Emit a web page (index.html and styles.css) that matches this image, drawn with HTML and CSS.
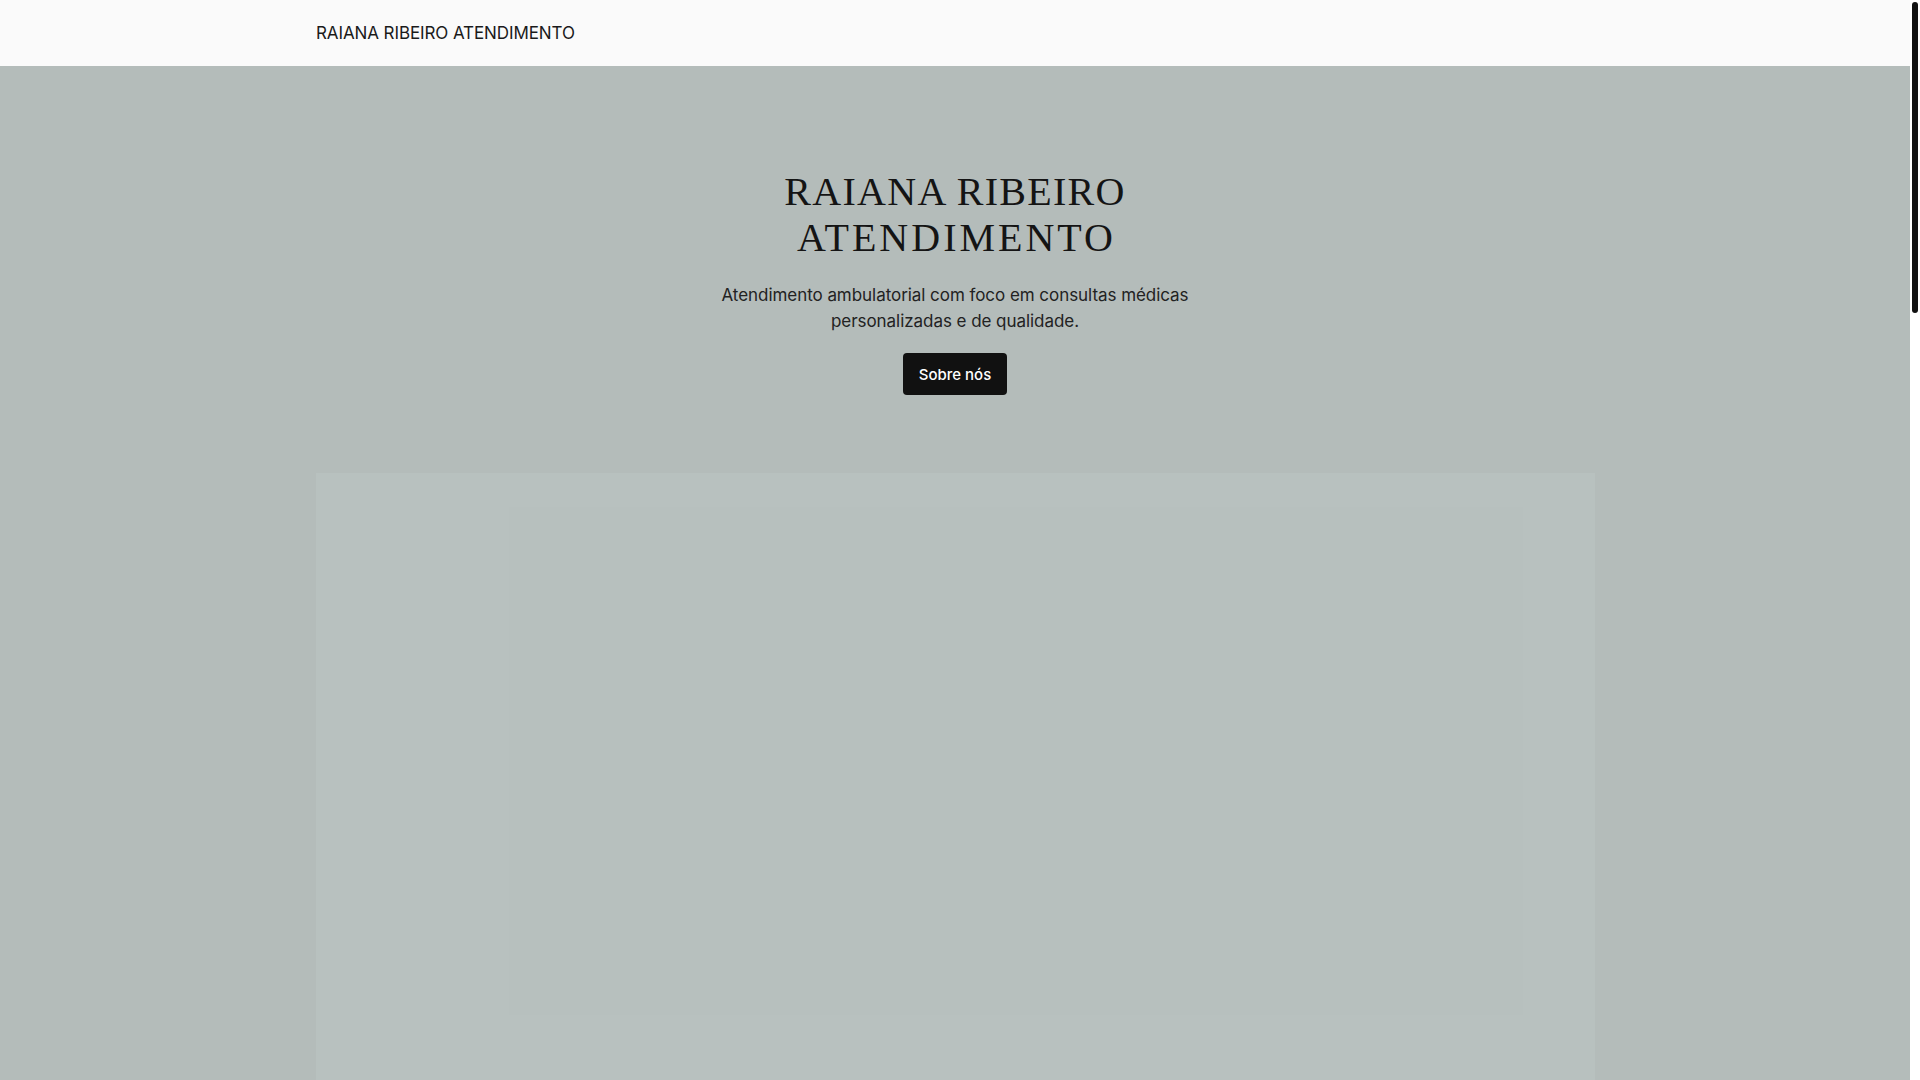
FILE: index.html
```html
<!DOCTYPE html>
<html lang="pt-BR">
<head>
<meta charset="utf-8">
<title>Raiana Ribeiro Atendimento</title>
<link rel="stylesheet" href="styles.css">
</head>
<body>
<header class="site-header">
  <div class="container header-inner">
    <a class="brand" href="#">RAIANA RIBEIRO ATENDIMENTO</a>
  </div>
</header>
<main>
  <section class="hero">
    <div class="container hero-inner">
      <h1 class="hero-title"><span class="line-a">RAIANA RIBEIRO</span><span class="line-b">ATENDIMENTO</span></h1>
      <p class="hero-text">Atendimento ambulatorial com foco em consultas médicas<br>personalizadas e de qualidade.</p>
      <a class="btn" href="#">Sobre nós</a>
      <div class="hero-card">
        <div class="hero-card-image"></div>
      </div>
    </div>
  </section>
  <section class="below"></section>
</main>
<div class="scroll-track" aria-hidden="true"><div class="scroll-thumb"></div></div>
</body>
</html>
```

FILE: styles.css
```css
html {
  background: #ffffff;
}
body {
  margin: 0 10px 0 0;
  font-family: Inter, "Noto Sans", sans-serif;
  color: #1a1a1a;
  background: #b4bcba;
}
.scroll-track {
  position: fixed;
  top: 0;
  right: 0;
  width: 10px;
  height: 100vh;
  background: #ffffff;
}
.scroll-thumb {
  margin: 2px 0 0 2px;
  width: 6px;
  height: 311px;
  background: #111111;
  border-radius: 3px;
}
.container {
  width: 1280px;
  margin: 0 auto;
}
.site-header {
  background: #fafafa;
  height: 66px;
}
.header-inner {
  height: 100%;
  display: flex;
  align-items: center;
}
.brand {
  font-size: 17px;
  color: #1a1a1a;
  text-decoration: none;
  letter-spacing: -0.1px;
  padding-left: 1px;
}
.hero {
  background: #b4bcba;
}
.hero-inner {
  display: flex;
  flex-direction: column;
  align-items: center;
  padding-top: 103px;
}
.hero-title {
  margin: 0;
  font-family: "Liberation Serif", "Times New Roman", serif;
  font-weight: 400;
  font-size: 40px;
  line-height: 46px;
  text-align: center;
  color: #141414;
  display: flex;
  flex-direction: column;
  align-items: center;
}
.line-a {
  letter-spacing: 1.3px;
}
.line-b {
  letter-spacing: 3px;
  margin-right: -3px;
}
.hero-text {
  margin: 21px 0 0;
  font-size: 17px;
  line-height: 26px;
  letter-spacing: -0.05px;
  text-align: center;
  color: #222222;
}
.btn {
  margin-top: 19px;
  display: inline-flex;
  align-items: center;
  justify-content: center;
  height: 42px;
  padding: 0 16px;
  background: #111111;
  color: #ffffff;
  font-size: 15px;
  font-weight: 500;
  border-radius: 4px;
  text-decoration: none;
}
.hero-card {
  margin-top: 78px;
  width: 1279px;
  height: 900px;
  background: #b8c1bf;
  display: flex;
  padding: 34px 0 0 193px;
  box-sizing: border-box;
}
.hero-card-image {
  width: 1014px;
  height: 508px;
  background: #b7c0be;
}
.below {
  height: 2400px;
  background: #b4bcba;
}
```
